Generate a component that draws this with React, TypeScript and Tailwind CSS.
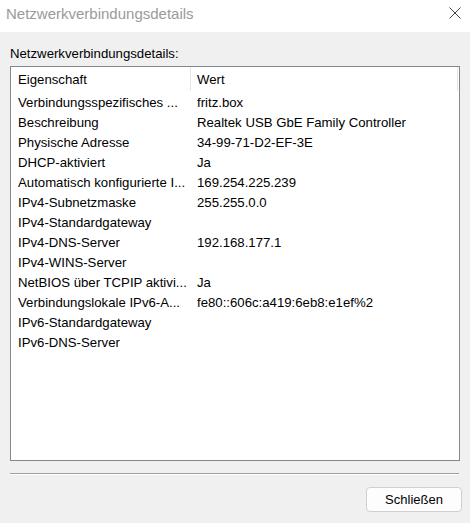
import React from 'react';

const rows: [string, string][] = [
  ['Verbindungsspezifisches ...', 'fritz.box'],
  ['Beschreibung', 'Realtek USB GbE Family Controller'],
  ['Physische Adresse', '34-99-71-D2-EF-3E'],
  ['DHCP-aktiviert', 'Ja'],
  ['Automatisch konfigurierte I...', '169.254.225.239'],
  ['IPv4-Subnetzmaske', '255.255.0.0'],
  ['IPv4-Standardgateway', ''],
  ['IPv4-DNS-Server', '192.168.177.1'],
  ['IPv4-WINS-Server', ''],
  ['NetBIOS über TCPIP aktivi...', 'Ja'],
  ['Verbindungslokale IPv6-A...', 'fe80::606c:a419:6eb8:e1ef%2'],
  ['IPv6-Standardgateway', ''],
  ['IPv6-DNS-Server', ''],
];

const App = () => {
  return (
    <div className="w-[470px] h-[523px] flex flex-col bg-[#f0f0f0] font-['Liberation_Sans',Arial,sans-serif] text-[13.2px] text-black">
      {/* title bar */}
      <div className="h-[32px] bg-white flex items-start justify-between pl-[6px] pr-[9px]">
        <span className="text-[15px] leading-[18px] pt-[5px] text-[#9a9a9a]">Netzwerkverbindungsdetails</span>
        <svg width="12" height="12" viewBox="0 0 12 12" className="text-[#444] mt-[7px]">
          <path d="M0.5 0.5 L11.5 11.5 M11.5 0.5 L0.5 11.5" stroke="currentColor" strokeWidth="1" fill="none" />
        </svg>
      </div>

      <div className="flex-1 flex flex-col px-[10px] pt-[14px]">
        <div className="leading-[16px] mb-[4px]">Netzwerkverbindungsdetails:</div>

        <div className="h-[395px] bg-white border border-[#828790] flex flex-col">
          <div className="h-[24px] flex items-stretch">
            <div className="w-[180px] pl-[7px] pt-[5px] leading-[16px] border-r border-[#e5e5e5]">Eigenschaft</div>
            <div className="flex-1 pl-[6px] pt-[5px] leading-[16px] border-r border-[#e5e5e5] mr-[1px]">Wert</div>
          </div>
          {rows.map(([name, value]) => (
            <div key={name} className="h-[20px] flex pt-[4px] leading-[15px]">
              <div className="w-[181px] pl-[7px] whitespace-nowrap overflow-hidden">{name}</div>
              <div className="flex-1 pl-[5px] whitespace-nowrap">{value}</div>
            </div>
          ))}
        </div>

        <div className="mt-[12px] h-[2px] border-t border-[#a0a0a0] bg-white mr-[1px]" />

        <div className="flex justify-end mt-[12px]">
          <button className="w-[96px] h-[25px] rounded-[4px] border border-[#d0d0d0] bg-[#fdfdfd] text-[13px] text-black mr-[-2px]">
            Schließen
          </button>
        </div>
      </div>
    </div>
  );
};

export default App;
